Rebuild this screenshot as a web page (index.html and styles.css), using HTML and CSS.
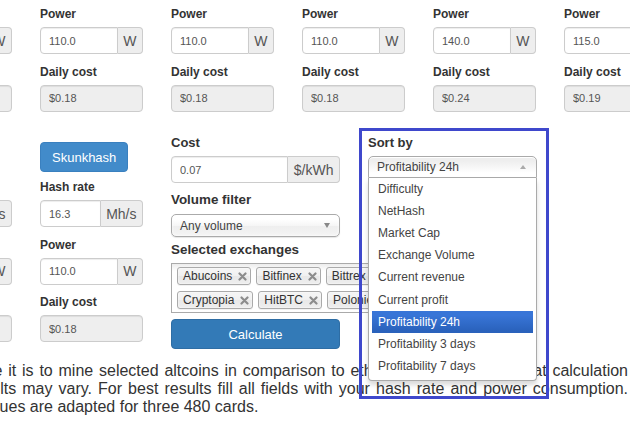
FILE: index.html
```html
<!DOCTYPE html>
<html>
<head>
<meta charset="utf-8">
<title>Calculator</title>
<link rel="stylesheet" href="styles.css">
</head>
<body>
<div class="page">
  <div class="gpu-row">
    <div class="gpu">
      <div class="field"><label>Power</label><div class="igroup"><input class="ctl" value="110.0"><span class="addon">W</span></div></div>
      <div class="field"><label>Daily cost</label><input class="ctl ro" value="$0.18" readonly></div>
    </div>
    <div class="gpu">
      <div class="field"><label>Power</label><div class="igroup"><input class="ctl" value="110.0"><span class="addon">W</span></div></div>
      <div class="field"><label>Daily cost</label><input class="ctl ro" value="$0.18" readonly></div>
    </div>
    <div class="gpu">
      <div class="field"><label>Power</label><div class="igroup"><input class="ctl" value="110.0"><span class="addon">W</span></div></div>
      <div class="field"><label>Daily cost</label><input class="ctl ro" value="$0.18" readonly></div>
    </div>
    <div class="gpu">
      <div class="field"><label>Power</label><div class="igroup"><input class="ctl" value="110.0"><span class="addon">W</span></div></div>
      <div class="field"><label>Daily cost</label><input class="ctl ro" value="$0.18" readonly></div>
    </div>
    <div class="gpu">
      <div class="field"><label>Power</label><div class="igroup"><input class="ctl" value="140.0"><span class="addon">W</span></div></div>
      <div class="field"><label>Daily cost</label><input class="ctl ro" value="$0.24" readonly></div>
    </div>
    <div class="gpu">
      <div class="field"><label>Power</label><div class="igroup"><input class="ctl" value="115.0"><span class="addon">W</span></div></div>
      <div class="field"><label>Daily cost</label><input class="ctl ro" value="$0.19" readonly></div>
    </div>
  </div>

  <div class="main-row">
    <div class="gpu">
      <button class="btn algo">Pascal</button>
      <div class="field"><label>Hash rate</label><div class="igroup"><input class="ctl" value="1.9"><span class="addon">Gh/s</span></div></div>
      <div class="field"><label>Power</label><div class="igroup"><input class="ctl" value="110.0"><span class="addon">W</span></div></div>
      <div class="field"><label>Daily cost</label><input class="ctl ro" value="$0.18" readonly></div>
    </div>
    <div class="gpu">
      <button class="btn algo">Skunkhash</button>
      <div class="field"><label>Hash rate</label><div class="igroup"><input class="ctl" value="16.3"><span class="addon">Mh/s</span></div></div>
      <div class="field"><label>Power</label><div class="igroup"><input class="ctl" value="110.0"><span class="addon">W</span></div></div>
      <div class="field"><label>Daily cost</label><input class="ctl ro" value="$0.18" readonly></div>
    </div>

    <div class="settings">
      <div class="h-sm">Cost</div>
      <div class="igroup"><input class="ctl" value="0.07"><span class="addon">$/kWh</span></div>
      <div class="h-md gap-top">Volume filter</div>
      <div class="chosen"><span>Any volume</span><span class="caret-down"></span></div>
      <div class="h-md gap-top-sm">Selected exchanges</div>
      <div class="choices">
        <span class="tag">Abucoins<svg viewBox="0 0 9 9"><path d="M1.5 1.5l6 6M7.5 1.5l-6 6"/></svg></span>
        <span class="tag">Bitfinex<svg viewBox="0 0 9 9"><path d="M1.5 1.5l6 6M7.5 1.5l-6 6"/></svg></span>
        <span class="tag">Bittrex<svg viewBox="0 0 9 9"><path d="M1.5 1.5l6 6M7.5 1.5l-6 6"/></svg></span>
        <span class="tag">Cryptopia<svg viewBox="0 0 9 9"><path d="M1.5 1.5l6 6M7.5 1.5l-6 6"/></svg></span>
        <span class="tag">HitBTC<svg viewBox="0 0 9 9"><path d="M1.5 1.5l6 6M7.5 1.5l-6 6"/></svg></span>
        <span class="tag">Poloniex<svg viewBox="0 0 9 9"><path d="M1.5 1.5l6 6M7.5 1.5l-6 6"/></svg></span>
      </div>
      <button class="btn calc">Calculate</button>
    </div>

    <div class="sort">
      <div class="h-sm">Sort by</div>
      <div class="chosen-wrap">
        <div class="chosen open"><span>Profitability 24h</span><span class="caret-up"></span></div>
        <div class="drop">
          <ul>
            <li>Difficulty</li>
            <li>NetHash</li>
            <li>Market Cap</li>
            <li>Exchange Volume</li>
            <li>Current revenue</li>
            <li>Current profit</li>
            <li class="hl">Profitability 24h</li>
            <li>Profitability 3 days</li>
            <li>Profitability 7 days</li>
          </ul>
        </div>
      </div>
    </div>
  </div>

  <p class="about">
    <span class="line l1">profitable it is to mine selected altcoins in comparison to ethereum. Please note that calculation</span>
    <span class="line l2">results may vary. For best results fill all fields with your hash rate and power consumption.</span>
    <span class="line l3">Default values are adapted for three 480 cards.</span>
  </p>
</div>
<div class="highlight"></div>
</body>
</html>
```

FILE: styles.css
```css
* { box-sizing: border-box; }
html, body { margin: 0; padding: 0; }
body {
  width: 630px;
  height: 423px;
  overflow: hidden;
  position: relative;
  background: #fff;
  font-family: "Liberation Sans", Arial, sans-serif;
  color: #333;
}
.page {
  margin-left: -91px;
  padding-top: 6px;
}
.gpu-row, .main-row {
  display: flex;
  gap: 28px;
  align-items: flex-start;
}
.main-row { margin-top: 13px; }
.gpu { width: 103px; flex: none; }
.field { margin-bottom: 9.5px; }
.field label {
  display: block;
  font-size: 12px;
  font-weight: bold;
  line-height: 17px;
  margin-bottom: 4px;
  color: #333;
}
.igroup { display: flex; height: 27px; }
.ctl {
  display: block;
  width: 100%;
  height: 27px;
  margin: 0;
  padding: 0 8px;
  border: 1px solid #ccc;
  border-radius: 4px;
  font: 11px "Liberation Sans", Arial, sans-serif;
  color: #555;
  background: #fff;
  box-shadow: inset 0 1px 1px rgba(0,0,0,.075);
  outline: none;
}
.igroup .ctl { flex: 1; min-width: 0; border-radius: 4px 0 0 4px; }
.ctl.ro { background: #eee; }
.addon {
  flex: none;
  display: flex;
  align-items: center;
  padding: 0 5.5px;
  border: 1px solid #ccc;
  border-left: 0;
  border-radius: 0 4px 4px 0;
  background: #eee;
  color: #555;
  font-size: 14px;
}
.btn {
  display: block;
  height: 30px;
  border: 1px solid;
  border-radius: 4px;
  font: 13px "Liberation Sans", Arial, sans-serif;
  color: #fff;
  text-align: center;
  padding: 0 11px;
}
.algo { margin: 8px 0 7.3px; background: #428bca; border-color: #3a80bf; }
.calc { width: 100%; margin-top: 6px; background: #337ab7; border-color: #2e6da4; }

.settings, .sort { width: 169px; flex: none; }
.h-sm { font-size: 13px; font-weight: bold; line-height: 18px; margin-bottom: 4px; color: #333; }
.h-md { font-size: 13.4px; font-weight: bold; line-height: 19px; margin-bottom: 5px; color: #333; }
.gap-top { margin-top: 7px; }
.gap-top-sm { margin-top: 3px; margin-bottom: 4px; }

.chosen {
  display: flex;
  align-items: center;
  justify-content: space-between;
  height: 23px;
  padding: 0 9px 0 8px;
  border: 1px solid #aaa;
  border-radius: 5px;
  background: linear-gradient(#fff 20%, #f6f6f6 50%, #eee 52%, #f4f4f4 100%);
  box-shadow: inset 0 0 3px #fff, 0 1px 1px rgba(0,0,0,.1);
  font-size: 12px;
  color: #444;
}
.caret-down {
  width: 0; height: 0;
  border-left: 3.5px solid transparent;
  border-right: 3.5px solid transparent;
  border-top: 5px solid #888;
}
.caret-up {
  width: 0; height: 0;
  border-left: 3px solid transparent;
  border-right: 3px solid transparent;
  border-bottom: 4px solid #aaa;
  margin-right: 1px;
}
.chosen-wrap { position: relative; }
.chosen.open {
  height: 22px;
  border-radius: 5px 5px 0 0;
  background: linear-gradient(#eee 20%, #fff 80%);
  box-shadow: inset 0 1px 0 #fff;
}
.drop {
  position: absolute;
  left: 0; right: 0; top: 100%;
  z-index: 5;
  background: #fff;
  border: 1px solid #aaa;
  border-top: 0;
  border-radius: 0 0 4px 4px;
  box-shadow: 0 4px 5px rgba(0,0,0,.15);
}
.drop ul { list-style: none; margin: 0 3px 2px 0; padding: 0 0 0 3px; }
.drop li {
  padding: 3.5px 6px;
  line-height: 15.2px;
  font-size: 12px;
  color: #444;
  white-space: nowrap;
}
.drop li.hl { background: linear-gradient(#3875d7 20%, #2a62bc 90%); color: #fff; }

.choices {
  width: 250px;
  display: flex;
  flex-wrap: wrap;
  padding: 0 5px;
  border: 1px solid #aaa;
  background: linear-gradient(#eee 1%, #fff 15%);
}
.tag {
  display: flex;
  align-items: center;
  height: 18px;
  margin: 3px 5px 3px 0;
  padding: 0 3px 0 5px;
  border: 1px solid #aaa;
  border-radius: 3px;
  background: linear-gradient(#f4f4f4 20%, #f0f0f0 50%, #e8e8e8 52%, #eee 100%);
  box-shadow: inset 0 0 2px #fff, 0 1px 0 rgba(0,0,0,.05);
  font-size: 12px;
  color: #333;
  white-space: nowrap;
}
.tag svg { width: 9px; height: 9px; margin-left: 6px; }
.tag path { stroke: #8c8c8c; stroke-width: 2.2; stroke-linecap: round; fill: none; }

.about {
  width: 704px;
  margin: 10px 0 0 15px;
  font-size: 16px;
  color: #333;
}
.line { display: block; text-align: justify; text-align-last: justify; white-space: nowrap; }
.l1 { text-indent: 12.6px; white-space: normal; }
.l2 { text-indent: 45px; white-space: normal; }
.l3 { text-align-last: left; }

.highlight {
  position: absolute;
  left: 359px;
  top: 128px;
  width: 190px;
  height: 271px;
  border: 3px solid #3f48cc;
  z-index: 10;
  pointer-events: none;
}
```
